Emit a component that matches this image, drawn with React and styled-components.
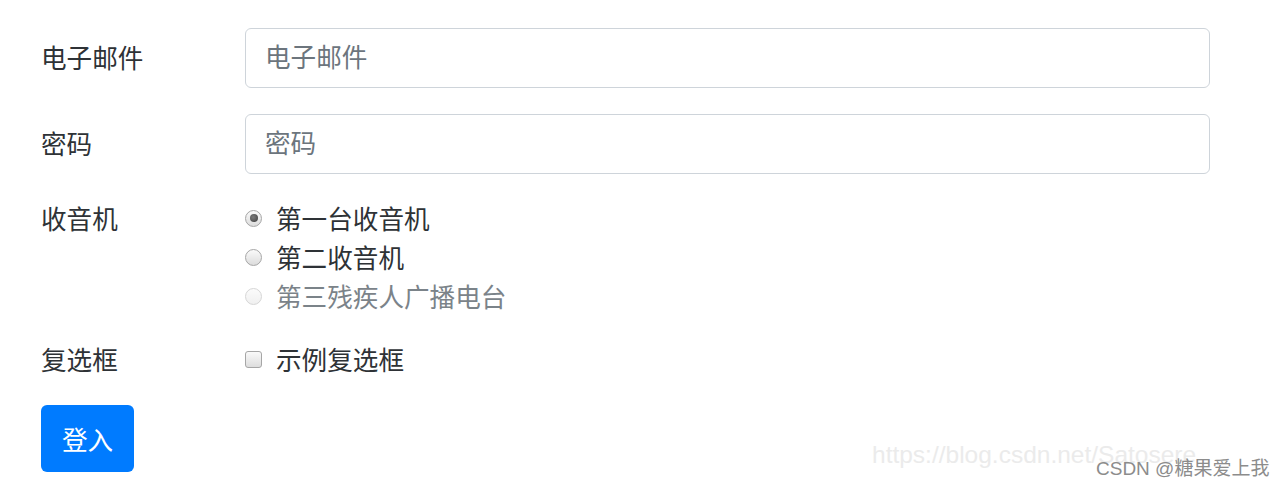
import React from 'react';
import styled, { createGlobalStyle, css } from 'styled-components';

const GlobalStyle = createGlobalStyle`
  html, body {
    margin: 0;
    padding: 0;
    background: #ffffff;
  }
  body {
    font-family: "Noto Sans CJK SC", "Liberation Sans", sans-serif;
    color: #2e3236;
  }
`;

const Page = styled.div`
  position: relative;
  width: 1283px;
  height: 489px;
  overflow: hidden;
  background: #fff;
`;

const Form = styled.form`
  width: 1169px;
  padding: 28px 0 0 41px;
`;

const Row = styled.div`
  display: grid;
  grid-template-columns: 204px 1fr;
  align-items: ${p => (p.$top ? 'start' : 'center')};
  margin-bottom: ${p => p.$gap || 26}px;
`;

const Label = styled.label`
  font-size: 25.6px;
  line-height: 35px;
  padding-bottom: 4px;
  color: #2e3236;
`;

const Input = styled.input`
  box-sizing: border-box;
  width: 100%;
  height: 60px;
  padding: 0 19px 5px;
  border: 1.5px solid #ced4da;
  border-radius: 6px;
  font-family: "Noto Sans CJK SC", sans-serif;
  font-size: 25.6px;
  color: #495057;
  outline: none;

  &::placeholder {
    color: #6c757d;
  }
`;

const OptionList = styled.div`
  display: flex;
  flex-direction: column;
`;

const Option = styled.div`
  display: flex;
  align-items: center;
  gap: 14px;
  height: 39px;
  font-size: 25.6px;
  color: ${p => (p.$disabled ? '#7b8389' : '#2e3236')};
`;

const OptionText = styled.span`
  line-height: 35px;
  padding-bottom: 4px;
`;

const Radio = styled.span`
  position: relative;
  box-sizing: border-box;
  width: 17px;
  height: 17px;
  margin-top: -3px;
  border-radius: 50%;
  flex-shrink: 0;
  border: 1px solid ${p => (p.$disabled ? '#d6d6d6' : '#a6a6a6')};
  background: ${p =>
    p.$disabled
      ? 'linear-gradient(#fbfbfb, #f0f0f0)'
      : 'linear-gradient(#fafafa, #dcdcdc)'};

  ${p =>
    p.$checked &&
    css`
      &::after {
        content: '';
        position: absolute;
        left: 3.5px;
        top: 3.5px;
        width: 8px;
        height: 8px;
        border-radius: 50%;
        background: radial-gradient(circle at 40% 40%, #7a7a7a, #3f3f3f);
      }
    `}
`;

const Checkbox = styled.span`
  box-sizing: border-box;
  width: 17px;
  height: 17px;
  margin-top: -3px;
  flex-shrink: 0;
  border-radius: 3px;
  border: 1px solid #a6a6a6;
  background: linear-gradient(#fafafa, #dddddd);
`;

const SubmitButton = styled.button`
  width: 93px;
  height: 67px;
  border: none;
  border-radius: 6px;
  background: #007bff;
  color: #ffffff;
  font-family: "Noto Sans CJK SC", sans-serif;
  font-size: 25.6px;
  padding: 0;
  cursor: pointer;
`;

const Watermark = styled.div`
  position: absolute;
  left: 872px;
  top: 440px;
  font-family: "Liberation Sans", Arial, sans-serif;
  font-size: 24.5px;
  line-height: 30px;
  color: #ebebeb;
  white-space: nowrap;
`;

const Signature = styled.div`
  position: absolute;
  left: 1096px;
  top: 456px;
  font-family: "Liberation Sans", "Noto Sans CJK SC", sans-serif;
  font-size: 19px;
  line-height: 26px;
  color: #8c8c8c;
  white-space: nowrap;
`;

const radios = [
  { text: '第一台收音机', checked: true },
  { text: '第二收音机' },
  { text: '第三残疾人广播电台', disabled: true },
];

export default function App() {
  return (
    <Page>
      <GlobalStyle />
      <Form onSubmit={e => e.preventDefault()}>
        <Row>
          <Label>电子邮件</Label>
          <Input type="email" placeholder="电子邮件" />
        </Row>
        <Row>
          <Label>密码</Label>
          <Input type="password" placeholder="密码" />
        </Row>
        <Row $top $gap={24}>
          <Label>收音机</Label>
          <OptionList>
            {radios.map(r => (
              <Option key={r.text} $disabled={r.disabled}>
                <Radio $checked={r.checked} $disabled={r.disabled} />
                <OptionText>{r.text}</OptionText>
              </Option>
            ))}
          </OptionList>
        </Row>
        <Row $gap={25}>
          <Label>复选框</Label>
          <Option>
            <Checkbox />
            <OptionText>示例复选框</OptionText>
          </Option>
        </Row>
        <SubmitButton type="submit">登入</SubmitButton>
      </Form>
      <Watermark>https://blog.csdn.net/Satosere</Watermark>
      <Signature>CSDN @糖果爱上我</Signature>
    </Page>
  );
}
